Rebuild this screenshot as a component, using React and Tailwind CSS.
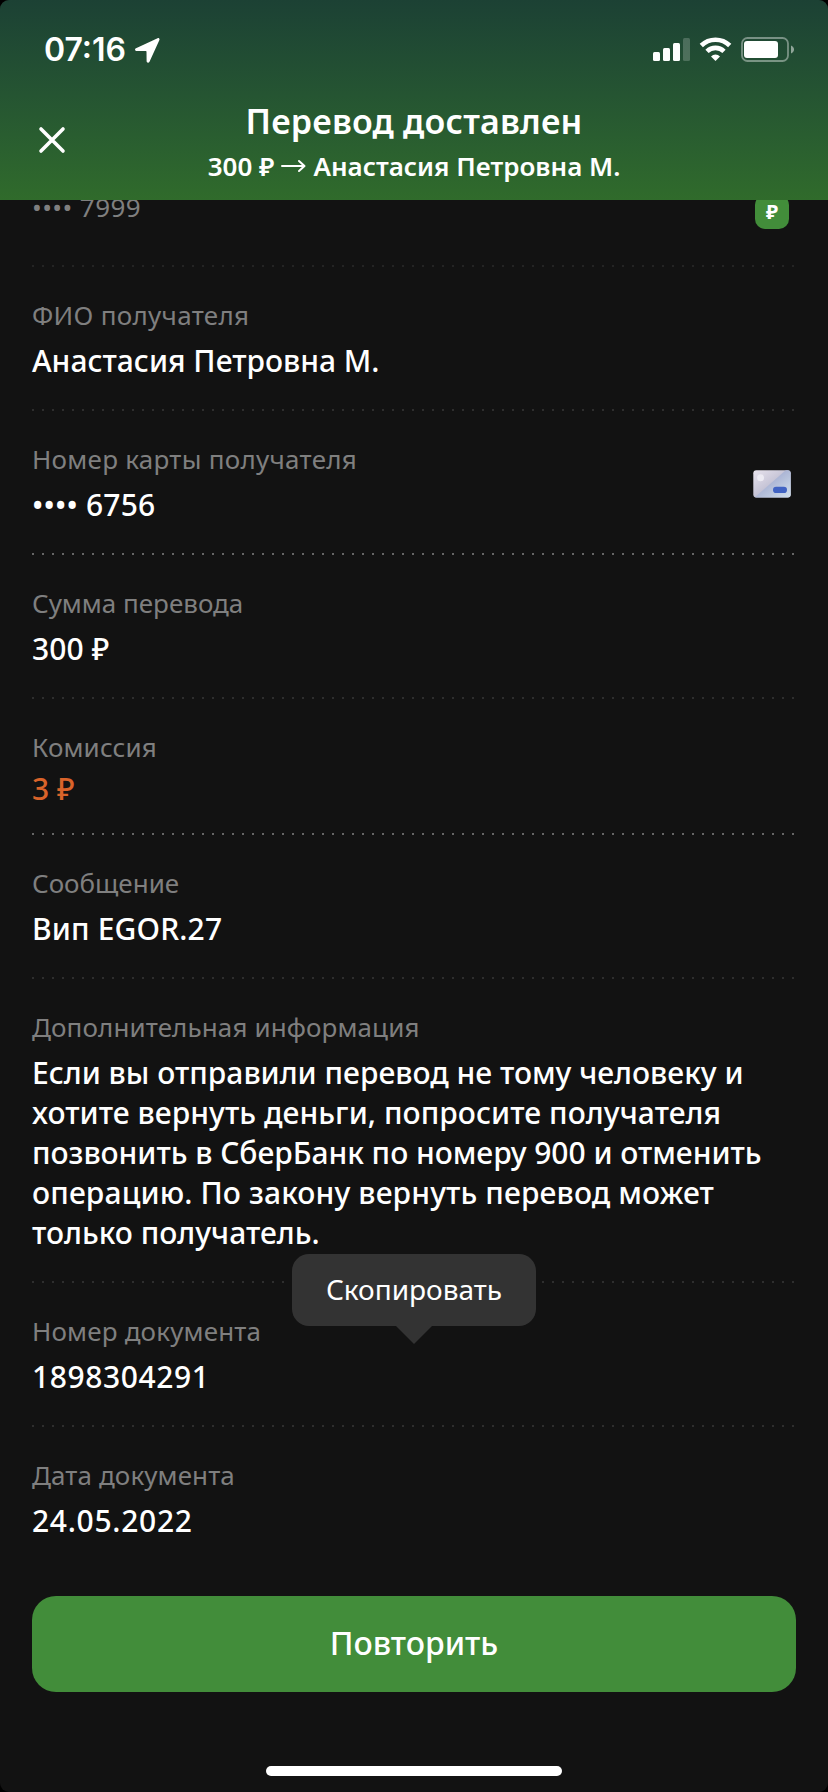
import { clsx } from 'clsx';

const details = [
  { label: 'ФИО получателя', labelClass: 'tracking-[0.3px]', value: 'Анастасия Петровна М.', line: 'text-[#2e2e2e]' },
  {
    label: 'Номер карты получателя',
    labelClass: 'tracking-[0.27px]',
    value: '•••• 6756',
    valueClass: 'tracking-[0.2px]',
    card: true,
    line: 'text-[#666666]',
  },
  { label: 'Сумма перевода', value: '300 ₽', valueClass: 'tracking-[0.1px]', line: 'text-[#2e2e2e]' },
  { label: 'Комиссия', labelClass: 'tracking-[0.15px]', value: '3 ₽', fee: true, line: 'text-[#666666]' },
  { label: 'Сообщение', value: 'Вип EGOR.27', valueClass: 'tracking-[0.15px]', line: 'text-[#2e2e2e]' },
  {
    label: 'Дополнительная информация',
    labelClass: 'tracking-[0.11px]',
    value: [
      { text: 'Если вы отправили перевод не тому человеку и' },
      { text: 'хотите вернуть деньги, попросите получателя', className: 'tracking-[0.06px]' },
      { text: 'позвонить в СберБанк по номеру 900 и отменить', className: 'tracking-[-0.03px]' },
      { text: 'операцию. По закону вернуть перевод может', className: 'tracking-[0.13px]' },
      { text: 'только получатель.' },
    ],
    line: 'text-[#2e2e2e]',
  },
  {
    label: 'Номер документа',
    labelClass: 'tracking-[0.17px]',
    value: '1898304291',
    valueClass: 'tracking-[0.6px]',
    line: 'text-[#2e2e2e]',
  },
  { label: 'Дата документа', labelClass: 'tracking-[0.1px]', value: '24.05.2022', valueClass: 'tracking-[0.7px]' },
];

function DottedLine({ className }) {
  return (
    <div
      className={clsx(
        'h-[2px] w-[762px] bg-[repeating-linear-gradient(90deg,currentColor_0_2px,transparent_2px_10px)]',
        className
      )}
    />
  );
}

function CardIcon() {
  return (
    <svg width="38" height="28" viewBox="0 0 38 28" className="mt-[2px] shrink-0">
      <defs>
        <linearGradient id="cardLight" x1="0" y1="0" x2="1" y2="1">
          <stop offset="0" stopColor="#e9e4ee" />
          <stop offset="0.6" stopColor="#bdbcd0" />
        </linearGradient>
        <linearGradient id="cardDark" x1="0" y1="0" x2="1" y2="1">
          <stop offset="0.4" stopColor="#a9b2d3" />
          <stop offset="1" stopColor="#d3e2ee" />
        </linearGradient>
        <clipPath id="cardShape">
          <rect x="0.3" y="0.3" width="37.4" height="27.2" rx="3" />
        </clipPath>
      </defs>
      <g clipPath="url(#cardShape)">
        <rect width="38" height="28" fill="url(#cardLight)" />
        <path d="M33 0h5v28H1z" fill="url(#cardDark)" />
      </g>
      <circle cx="7.6" cy="7.8" r="3.5" fill="#edebf3" />
      <rect x="20" y="16.800" width="14" height="6.200" rx="3.100" fill="#4163c3" />
    </svg>
  );
}

function StatusBar() {
  return (
    <div className="flex h-[100px] justify-between pr-[33px] pl-[44px]">
      <div className="flex pt-[30px] font-['Inter',sans-serif] text-[32px] leading-[40px] font-semibold">
        <span className="w-[91px]">07:16</span>
        <svg width="25" height="25" viewBox="0 0 25 25" className="mt-[8px]" fill="currentColor">
          <path d="M22.600.2 1 10.200C-.5 10.900-.2 12.900 1.400 13l9.500.1c.4 0 .6.2.6.6l.1 9.300c0 2 2.100 2.300 2.900.7L24.300 2.200c.6-1.300-.3-2.600-1.700-2z" />
        </svg>
      </div>
      <svg width="142" height="26" viewBox="0 0 142 26" className="mt-[37px]" fill="currentColor">
        <rect x="0" y="15" width="7" height="9" rx="1.500" />
        <rect x="10" y="11" width="7" height="13" rx="1.500" />
        <rect x="20" y="6" width="7" height="18" rx="1.500" />
        <rect x="30" y="1" width="7" height="23" rx="1.500" opacity="0.2" />
        <g fill="none" stroke="currentColor" strokeWidth="4.600">
          <path d="M48.300 8.500a20.300 20.300 0 0 1 28.400 0" />
          <path d="M54 14.300a12.200 12.200 0 0 1 17 0" />
        </g>
        <path d="M62.500 24l4.500-4.600a6.400 6.400 0 0 0-9 0z" />
        <rect x="89" y="1" width="46" height="23" rx="5.500" fill="none" stroke="currentColor" strokeWidth="1.800" opacity="0.4" />
        <rect x="91" y="4" width="34" height="17" rx="3" />
        <path d="M138 8.500c4 1.400 4 6.600 0 8z" opacity="0.5" />
      </svg>
    </div>
  );
}

function DetailRow({ label, labelClass, value, valueClass, card, fee, line }) {
  return (
    <>
      <div className={clsx('flex items-center justify-between pt-[30px] pr-[5px]', fee ? 'pb-[24px]' : 'pb-[28px]')}>
        <div>
          <div className={clsx('text-[26px] leading-[36px] text-[#7f7f7f]', labelClass)}>{label}</div>
          <div
            className={clsx(
              'text-[30px] leading-[40px] font-medium whitespace-nowrap',
              fee ? 'mt-[4px] text-[#d9632a]' : 'mt-[8px]',
              valueClass
            )}
          >
            {Array.isArray(value)
              ? value.map(({ text, className }) => (
                  <div key={text} className={className}>
                    {text}
                  </div>
                ))
              : value}
          </div>
        </div>
        {card && <CardIcon />}
      </div>
      {line && <DottedLine className={line} />}
    </>
  );
}

export default function App() {
  return (
    <div className="h-[1792px] w-[828px] overflow-hidden bg-black">
      <div className="flex h-full flex-col overflow-hidden rounded-[9px] bg-[#121212] font-['Noto_Sans',sans-serif] text-white">
        <header className="h-[200px] shrink-0 bg-linear-to-b from-[#1c4134] to-[#306b2b]">
          <StatusBar />
          <div className="grid grid-cols-[100px_1fr_100px]">
            <svg width="28" height="28" viewBox="0 0 28 28" className="mt-[26px] ml-[38px]" stroke="currentColor" strokeWidth="3.600" strokeLinecap="round">
              <path d="M3 3l22 22M25 3L3 25" />
            </svg>
            <div className="text-center font-semibold whitespace-nowrap">
              <div className="-mt-px text-[34px] leading-[44px] tracking-[0.2px]">Перевод доставлен</div>
              <div className="mt-[5px] flex items-center justify-center text-[26px] leading-[36px]">
                <span>300 ₽</span>
                <svg width="25" height="14" viewBox="0 0 25 14" className="mx-[7px]" fill="none" stroke="currentColor" strokeWidth="2" strokeLinecap="round" strokeLinejoin="round">
                  <path d="M1 7h22M18 2l5.500 5-5.500 5" />
                </svg>
                <span>Анастасия Петровна М.</span>
              </div>
            </div>
          </div>
        </header>

        <main className="relative h-[1380px] shrink-0 overflow-hidden px-[32px]">
          <div className="-mt-[11px] flex h-[76px] justify-between pr-[7px]">
            <div className="text-[26px] leading-[36px] tracking-[0.4px] text-[#7f7f7f]">•••• 7999</div>
            <div className="mt-[6px] flex h-[34px] w-[34px] items-center justify-center rounded-[10px] bg-[#428d3a] text-[20px] font-bold">
              ₽
            </div>
          </div>
          <DottedLine className="text-[#242424]" />
          {details.map((item) => (
            <DetailRow key={item.label} {...item} />
          ))}

          {/* Подсказка поверх списка */}
          <div className="absolute top-[1054px] left-[292px] flex h-[72px] w-[244px] items-center justify-center rounded-[17px] bg-[#333333] pb-[2px] text-[28px]">
            Скопировать
            <svg width="36" height="18" viewBox="0 0 36 18" className="absolute top-[72px] left-[104px]" fill="#333333">
              <path d="M0 0h36L18 18z" />
            </svg>
          </div>
        </main>

        <footer className="flex flex-col items-center px-[32px] pt-[16px]">
          <button className="h-[96px] w-full rounded-[24px] bg-[#428d3a] pb-[2px] text-[32px] font-medium">Повторить</button>
          <div className="mt-[74px] h-[10px] w-[296px] rounded-full bg-white" />
        </footer>
      </div>
    </div>
  );
}
